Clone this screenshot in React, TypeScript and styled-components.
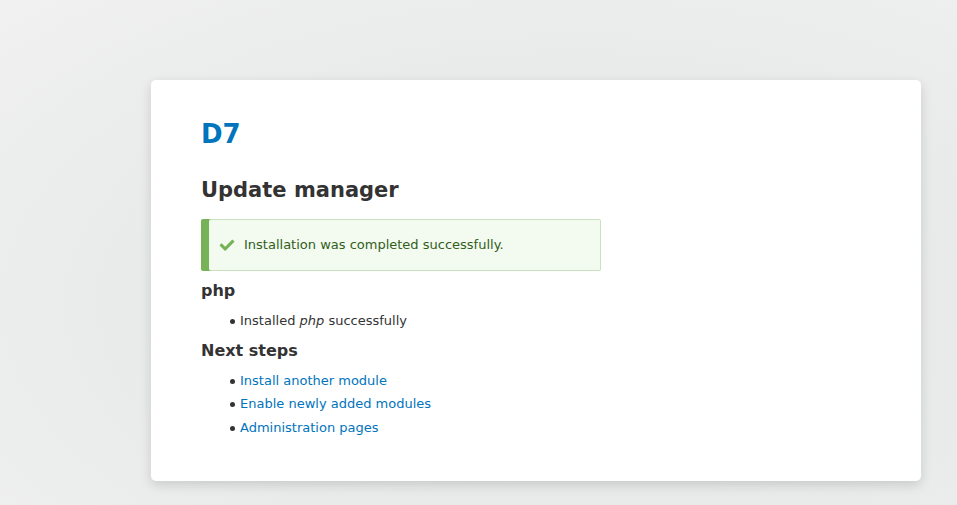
import React from "react";
import styled, { createGlobalStyle } from "styled-components";

const Global = createGlobalStyle`
  html, body { margin: 0; padding: 0; }
  body {
    font-family: "DejaVu Sans", "Lucida Grande", Verdana, sans-serif;
    font-size: 13px;
    color: #333;
    min-height: 505px;
    background: radial-gradient(ellipse at 60% 60%, #e6e7e6 0%, #e9eaea 55%, #f1f1f1 100%);
  }
`;

const Page = styled.div`
  display: flex;
  align-items: flex-start;
  padding: 80px 36px 25px 151px;
  min-height: 505px;
  box-sizing: border-box;
`;

const Card = styled.main`
  width: 770px;
  min-height: 400px;
  box-sizing: border-box;
  background: #fff;
  border-radius: 5px;
  box-shadow: 0 4px 12px rgba(0, 0, 0, 0.14);
  padding: 36px 50px 40px;
`;

const SiteName = styled.h1`
  margin: 0;
  font-size: 26px;
  line-height: 36px;
  font-weight: bold;
  color: #0074bd;
`;

const Title = styled.h1`
  margin: 23px 0 0;
  font-size: 21px;
  line-height: 30px;
  font-weight: bold;
  color: #333;
`;

const Message = styled.div`
  position: relative;
  margin: 14px 0 0 8px;
  width: 392px;
  box-sizing: border-box;
  padding: 15px 20px 15px 35px;
  line-height: 20px;
  color: #325e1c;
  background: #f3faef;
  border: 1px solid #c9e1bd;
  border-left-color: transparent;
  border-width: 1px 1px 1px 0;
  border-radius: 2px;
  box-shadow: -8px 0 0 #77b259;
`;

const CheckIcon = styled.svg`
  position: absolute;
  left: 10px;
  top: 17px;
  width: 16px;
  height: 16px;
`;

const SubTitle = styled.h2`
  margin: 8px 0 0;
  font-size: 16px;
  line-height: 24px;
  font-weight: bold;
  color: #333;
`;

const List = styled.ul`
  margin: 8px 0 0;
  padding: 0 0 0 39px;
  list-style: none;
`;

const Item = styled.li`
  position: relative;
  margin: 4px 0;
  line-height: 19.5px;
  &::before {
    content: "";
    position: absolute;
    left: -10px;
    top: 8px;
    width: 5px;
    height: 5px;
    border-radius: 50%;
    background: #333;
  }
`;

const Link = styled.a`
  color: #0074bd;
  text-decoration: none;
`;

export default function App() {
  return (
    <>
      <Global />
      <Page>
        <Card>
          <SiteName>D7</SiteName>
          <Title>Update manager</Title>
          <Message>
            <CheckIcon viewBox="0 0 16 16">
              <path
                d="M6.464 13.676c-.194.194-.513.194-.707 0l-4.96-4.955c-.194-.194-.194-.513 0-.707l1.405-1.407c.194-.194.512-.194.707 0l2.849 2.848c.194.194.513.194.707 0l6.629-6.626c.195-.194.514-.194.707 0l1.404 1.404c.193.194.193.513 0 .707l-8.741 8.736z"
                fill="#73b355"
              />
            </CheckIcon>
            Installation was completed successfully.
          </Message>
          <SubTitle>php</SubTitle>
          <List>
            <Item>
              Installed <em>php</em> successfully
            </Item>
          </List>
          <SubTitle>Next steps</SubTitle>
          <List>
            <Item>
              <Link href="#">Install another module</Link>
            </Item>
            <Item>
              <Link href="#">Enable newly added modules</Link>
            </Item>
            <Item>
              <Link href="#">Administration pages</Link>
            </Item>
          </List>
        </Card>
      </Page>
    </>
  );
}
